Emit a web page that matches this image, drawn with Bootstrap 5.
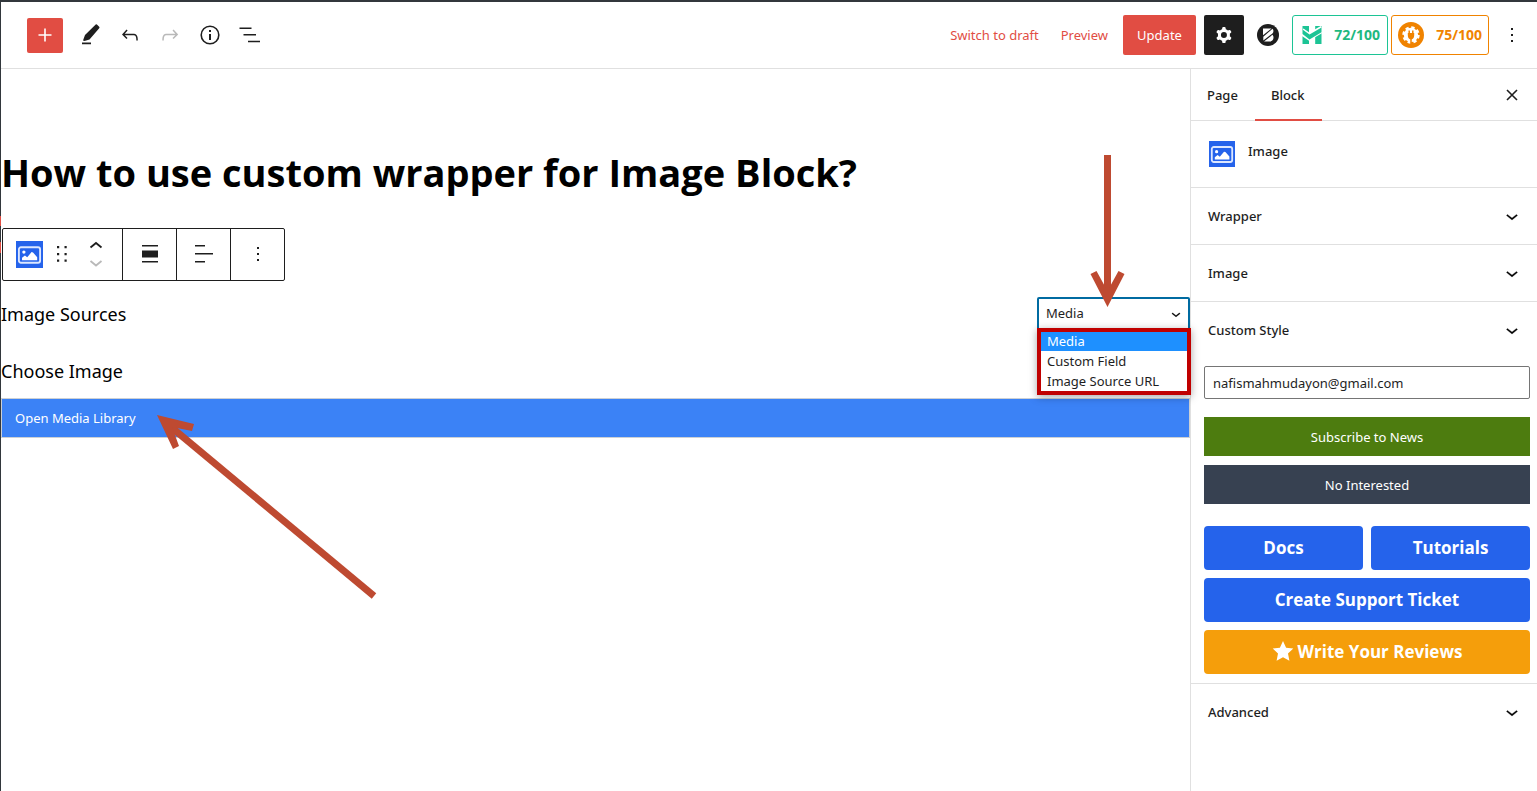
<!DOCTYPE html>
<html lang="en">
<head>
<meta charset="utf-8">
<meta name="viewport" content="width=device-width, initial-scale=1">
<title>Edit Page</title>
<link rel="stylesheet" href="https://cdn.jsdelivr.net/npm/bootstrap@5.3.0/dist/css/bootstrap.min.css">
<style>
:root { --ink: #1e1e1e; --accent: #e14d43; --line: #e0e0e0; --frame: #32373c; --royal: #2563eb; }
body { font-family: "Noto Sans", "Open Sans", sans-serif; font-size: 13px; line-height: 20px; color: var(--ink); background: #fff; border-top: 2px solid var(--frame); }
svg { display: block; flex: none; }
.frame-edge { width: 1px; background: linear-gradient(var(--frame) 214px, var(--accent) 214px 224px, var(--frame) 224px 240px, var(--accent) 240px 251px, var(--frame) 251px); }
button { color: inherit; }
.plain { border: 0; background: none; padding: 0; }
.topbar { height: 67px; border-bottom: 1px solid var(--line); padding: 0 10px 0 26px; }
.add-btn { width: 36px; height: 35px; border-radius: 2px; background: var(--accent); }
.tool-gap { gap: 16px; padding-left: 15px; }
.red-link { color: var(--accent); text-decoration: none; }
.links { gap: 22px; margin-right: 15px; }
.update-btn { height: 40px; width: 73px; background: var(--accent); color: #fff; border-radius: 2px; }
.gear-btn { width: 40px; height: 40px; background: var(--ink); border-radius: 2px; }
.score { height: 40px; border: 1px solid; border-radius: 3px; font-family: "Open Sans", sans-serif; font-size: 14px; font-weight: 700; padding: 0 7px; }
.score-green { color: #1fb980; border-color: #1cc495; width: 96px; }
.score-orange { color: #f08300; width: 98px; padding: 0 6px; margin-left: 3px; }
.sidebar { width: 347px; border-left: 1px solid var(--line); }
.tabs { height: 52px; border-bottom: 1px solid var(--line); padding-right: 16px; }
.tab-btn { padding: 0 17px 0 16px; font-weight: 500; }
.tab-btn.current { border-bottom: 2px solid var(--accent); padding-top: 2px; margin-bottom: -1px; }
.block-card { height: 67px; border-bottom: 1px solid var(--line); padding: 20px 18px; gap: 13px; font-weight: 500; }
.panel-head { width: 100%; height: 56px; padding: 0 13px 0 17px; font-weight: 500; }
.panel-line { border-bottom: 1px solid var(--line); }
.field { height: 33px; border: 1px solid #757575; border-radius: 2px; padding: 0 8px; width: 100%; color: var(--ink); }
.flat-btn { height: 39px; width: 100%; color: #fff; border: 0; }
.subscribe { background: #4d7c0f; margin-top: 18px; }
.decline { background: #374151; margin-top: 9px; }
.big-btn { height: 44px; border-radius: 4px; color: #fff; background: var(--royal); border: 0; font-family: "Open Sans", sans-serif; font-size: 17px; font-weight: 700; text-decoration: none; }
.big-btn.review { background: #f59e0b; }
.links-grid { margin-top: 14px; }
.help { padding: 8px 7px 9px 13px; border-bottom: 1px solid var(--line); }
.post-title { font-family: "Open Sans", sans-serif; font-size: 38px; line-height: 56px; font-weight: 700; color: #000; margin: 75px 0 28px; }
.block-bar { height: 53px; border: 1px solid var(--ink); border-radius: 2px; margin-left: 1px; }
.block-bar > * { display: flex; align-items: center; justify-content: center; padding-bottom: 1px !important; }
.block-bar > * + * { border-left: 1px solid var(--ink) !important; width: 54px; }
.block-main { width: 119px; padding: 0 19px 0 13px; }
.drag-grip { margin-right: 8px; }
.body-label { font-size: 18px; line-height: 34px; color: #000; }
.source-row { margin-top: 16px; height: 33px; }
.source-wrap { width: 153px; height: 33px; }
.source-select { width: 100%; height: 33px; border: 2px solid #006ba1; border-radius: 2px; padding: 0 7px 2px; appearance: none; background: #fff; color: var(--ink); outline: 0; }
.select-arrow { right: 5px; top: 8px; pointer-events: none; }
.options { top: 31px; left: 0; right: -1px; border: 4px solid #c00000; box-shadow: 0 2px 8px rgba(0,0,0,.35); z-index: 3; background: #fff; line-height: 19px; }
.options li { padding: 0 6px; }
.options li + li { padding-top: 1px; }
.options .picked { background: #1e90ff; color: #fff; }
.media-row { margin-top: 10px; }
.media-btn { height: 40px; width: 100%; background: #3b82f6; border: 1px solid #ccd0d4; color: #fff; text-align: left; padding: 0 13px; }
.arrow-down { top: -142px; left: 50px; z-index: 4; pointer-events: none; }
.arrow-up { left: 156px; top: 17px; pointer-events: none; }
</style>
<script src="https://cdn.jsdelivr.net/npm/bootstrap@5.3.0/dist/js/bootstrap.bundle.min.js"></script>
</head>
<body>
<svg width="0" height="0" class="position-absolute" aria-hidden="true">
  <symbol id="picture" viewBox="0 0 26 26"><rect width="26" height="26" fill="#2563eb"/><rect x="2.8" y="6" width="20.4" height="15" rx="2" fill="none" stroke="#dce7ff" stroke-width="1.8"/><circle cx="7.6" cy="10.7" r="1.6" fill="#fff"/><path d="M5.8 18.6v-2.400l2.800-2.200 2.200 1.700 4.200-5 1.400.3 4 4.600v3z" fill="#fff"/></symbol>
  <symbol id="chevron" viewBox="0 0 24 24"><path d="M17.500 11.600 12 16l-5.500-4.400.9-1.200L12 14l4.500-3.600 1 1.200z" stroke="#1e1e1e" stroke-width=".3"/></symbol>
  <symbol id="dots" viewBox="0 0 24 24"><path d="M13 19h-2v-2h2v2zm0-6h-2v-2h2v2zm0-6h-2V5h2v2z"/></symbol>
</svg>
<div class="d-flex align-items-stretch min-vh-100">
  <div class="frame-edge flex-shrink-0"></div>
  <div class="d-flex flex-column flex-grow-1">
    <header class="topbar d-flex align-items-center justify-content-between">
      <div class="d-flex align-items-center">
        <button class="plain add-btn d-flex align-items-center justify-content-center" aria-label="Add block"><svg width="24" height="24" viewBox="0 0 24 24" fill="#fff"><path d="M18.500 11.200h-5.700V5.500h-1.600v5.700H5.500v1.600h5.700v5.700h1.600v-5.700h5.700z"/></svg></button>
        <div class="d-flex tool-gap">
          <button class="plain" aria-label="Edit"><svg width="24" height="24" viewBox="0 0 24 24" fill="#1e1e1e"><path d="m21.200 3.800-2.300-2.300a1 1 0 0 0-1.200 0L7 12l-2 5.500 1.500.6 5-1.700L21.200 5.200a1 1 0 0 0 0-1.400zM4 19.600h9v1.600H4z"/></svg></button>
          <button class="plain" aria-label="Undo"><svg width="24" height="24" viewBox="0 0 24 24" fill="#1e1e1e"><path d="M18.300 11.700c-.6-.6-1.400-.9-2.300-.9H6.700l2.900-3.300-1.100-1-4.500 5L8.500 16l1-1-2.700-2.700H16c.5 0 .9.2 1.300.5 1 1 1 3.400 1 4.500v.3h1.500v-.2c0-1.500 0-4.300-1.500-5.700z"/></svg></button>
          <button class="plain" aria-label="Redo"><svg width="24" height="24" viewBox="0 0 24 24" fill="#b9b9b9"><path d="M15.600 6.500l-1.100 1 2.900 3.300H8c-.9 0-1.700.3-2.300.9-1.400 1.500-1.400 4.200-1.400 5.600v.2h1.500v-.3c0-1.100 0-3.500 1-4.500.3-.3.7-.5 1.300-.5h9.200L14.500 15l1.100 1.100 4.600-4.600-4.600-5z"/></svg></button>
          <button class="plain" aria-label="Details"><svg width="24" height="24" viewBox="0 0 24 24" fill="#1e1e1e"><circle cx="12" cy="12" r="8.800" fill="none" stroke="#1e1e1e" stroke-width="1.600"/><path d="M11 7h2v2h-2zm0 4h2v6h-2z"/></svg></button>
          <button class="plain" aria-label="Outline"><svg width="24" height="24" viewBox="0 0 24 24" fill="#1e1e1e"><path d="M1.500 4.500h12V6h-12zM5.500 11H18v1.500H5.500zM10 17.700h12v1.500H10z"/></svg></button>
        </div>
      </div>
      <div class="d-flex align-items-center">
        <div class="links d-flex">
          <a href="#" class="red-link">Switch to draft</a>
          <a href="#" class="red-link">Preview</a>
        </div>
        <button class="plain update-btn me-2">Update</button>
        <button class="plain gear-btn d-flex align-items-center justify-content-center me-2" aria-label="Settings"><svg width="24" height="24" viewBox="0 0 24 24" fill="#fff"><path fill-rule="evenodd" d="M10.289 4.836A1 1 0 0111.275 4h1.306a1 1 0 01.987.836l.244 1.466c.787.26 1.503.679 2.108 1.218l1.393-.522a1 1 0 011.216.437l.653 1.130a1 1 0 01-.23 1.273l-1.148.944a6.025 6.025 0 010 2.435l1.149.946a1 1 0 01.23 1.272l-.653 1.130a1 1 0 01-1.216.437l-1.394-.522c-.605.54-1.320.958-2.108 1.218l-.244 1.466a1 1 0 01-.987.836h-1.306a1 1 0 01-.986-.836l-.244-1.466a5.995 5.995 0 01-2.108-1.218l-1.394.522a1 1 0 01-1.217-.436l-.653-1.131a1 1 0 01.23-1.272l1.149-.946a6.026 6.026 0 010-2.435l-1.148-.944a1 1 0 01-.23-1.272l.653-1.131a1 1 0 011.217-.437l1.393.522a5.994 5.994 0 012.108-1.218l.244-1.466zM14.929 12a3 3 0 11-6 0 3 3 0 016 0z"/></svg></button>
        <button class="plain mx-1" aria-label="Builder"><svg width="24" height="24" viewBox="0 0 24 24"><circle cx="12" cy="12" r="11" fill="#1e1e1e"/><path d="M7 5.500h8.500L7 12.200zM16.500 5.800c1.300 1.200 1.300 3.500-.3 4.900L7.300 17.400V13.800zM16.500 11.800c2.200 2.400.6 6.700-3 6.700H8z" fill="#fff"/></svg></button>
        <button class="plain score score-green d-flex align-items-center justify-content-between ms-2"><svg width="24" height="24" viewBox="0 0 24 24"><path d="M2.500 3h6.500v18H2.500zM15.200 3h6.300v18h-6.300z" fill="#1cc495"/><path d="m1.500 8.500 7.700 5.200 13.300-7.800" fill="none" stroke="#fff" stroke-width="7"/><path d="M2.500 6.500 9.500 11.500 21.500 4.500v4.800L9.500 16.500 2.500 11z" fill="#1cc495"/></svg>72/100</button>
        <button class="plain score score-orange d-flex align-items-center justify-content-between"><svg width="26" height="26" viewBox="0 0 26 26"><circle cx="13" cy="13" r="13" fill="#f08300"/><circle cx="13" cy="13" r="7.200" fill="#fff"/><circle cx="13" cy="13" r="7.200" fill="none" stroke="#fff" stroke-width="3" stroke-dasharray="3.200 2.455"/><path d="M11.200 8.500v3M14.800 8.500v3M13 16v8" stroke="#f08300" stroke-width="1.500"/><path d="M9.800 11h6.400v2c0 2.500-1 4-2.200 4.300h-2c-1.200-.3-2.200-1.800-2.200-4.300z" fill="#f08300"/></svg>75/100</button>
        <button class="plain ms-2" aria-label="Options"><svg width="30" height="24" fill="#1e1e1e"><use href="#dots" width="30" height="24"/></svg></button>
      </div>
    </header>
    <div class="d-flex flex-grow-1">
      <main class="flex-grow-1">
        <h1 class="post-title">How to use custom wrapper for Image Block?</h1>
        <div class="block-bar d-inline-flex align-top" role="toolbar" aria-label="Block tools">
          <div class="block-main d-flex justify-content-between">
            <button class="plain" aria-label="Image block"><svg width="27" height="27"><use href="#picture"/></svg></button>
            <button class="plain drag-grip" aria-label="Drag"><svg width="12" height="18" viewBox="0 0 12 18" fill="#1e1e1e"><path d="M1 1h2.200v2.200H1zM8.500 1h2.200v2.200H8.500zM1 8h2.200v2.200H1zM8.500 8h2.200v2.200H8.500zM1 14.500h2.200v2.200H1zM8.500 14.500h2.200v2.200H8.500z"/></svg></button>
            <span class="d-flex flex-column gap-2">
              <button class="plain" aria-label="Move up"><svg width="14" height="10" viewBox="0 0 14 10" fill="none" stroke="#1e1e1e" stroke-width="1.800"><path d="m1.500 7.500 5.500-4.500 5.500 4.500"/></svg></button>
              <button class="plain" aria-label="Move down"><svg width="14" height="10" viewBox="0 0 14 10" fill="none" stroke="#b9b9b9" stroke-width="1.800"><path d="m1.500 3 5.500 4.500 5.500-4.500"/></svg></button>
            </span>
          </div>
          <button class="plain" aria-label="Align"><svg width="24" height="24" viewBox="0 0 24 24" fill="#1e1e1e"><path d="M4 3h16v1.600H4zM4 8.500h16v7H4zM4 19h16v1.600H4z"/></svg></button>
          <button class="plain" aria-label="Text align"><svg width="24" height="24" viewBox="0 0 24 24" fill="#1e1e1e"><path d="M3 3h10v1.600H3zM3 11h18v1.600H3zM3 19h10v1.600H3z"/></svg></button>
          <button class="plain" aria-label="More"><svg width="24" height="24" fill="#1e1e1e"><use href="#dots"/></svg></button>
        </div>
        <div class="source-row d-flex justify-content-between">
          <label class="body-label" for="source">Image Sources</label>
          <div class="source-wrap position-relative">
            <select id="source" class="source-select"><option selected>Media</option><option>Custom Field</option><option>Image Source URL</option></select>
            <svg class="select-arrow position-absolute" width="18" height="18"><use href="#chevron"/></svg>
            <ul class="options list-unstyled position-absolute mb-0" role="listbox" aria-label="Image Sources">
              <li class="picked" role="option" aria-selected="true">Media</li><li role="option">Custom Field</li><li role="option">Image Source URL</li>
            </ul>
            <svg class="arrow-down position-absolute" width="40" height="154" viewBox="0 0 40 154" aria-hidden="true"><path d="M20.500 0v138" stroke="#be4a31" stroke-width="7"/><path d="m3.500 119 6-3 11 20 11-20 6 3-17 33z" fill="#be4a31"/></svg>
          </div>
        </div>
        <p class="body-label mt-4 mb-0">Choose Image</p>
        <div class="media-row position-relative">
          <button class="media-btn">Open Media Library</button>
          <svg class="arrow-up position-absolute" width="224" height="184" viewBox="0 0 224 184" aria-hidden="true"><path d="M14 12 217 181" stroke="#be4a31" stroke-width="7"/><path d="M0 0 37 9l-2 7-20-4 7 19-6 3z" fill="#be4a31"/></svg>
        </div>
      </main>
      <aside class="sidebar flex-shrink-0">
        <div class="tabs d-flex justify-content-between">
          <div class="d-flex">
            <button class="plain tab-btn">Page</button><button class="plain tab-btn current">Block</button>
          </div>
          <button class="plain" aria-label="Close"><svg width="18" height="18" viewBox="0 0 18 18" fill="none" stroke="#1e1e1e" stroke-width="1.600"><path d="m4 4 10 10M14 4 4 14"/></svg></button>
        </div>
        <div class="block-card d-flex"><svg width="26" height="26"><use href="#picture"/></svg><span>Image</span></div>
        <div class="panel-line"><button class="plain panel-head d-flex align-items-center justify-content-between">Wrapper<svg width="24" height="24"><use href="#chevron"/></svg></button></div>
        <div class="panel-line"><button class="plain panel-head d-flex align-items-center justify-content-between">Image<svg width="24" height="24"><use href="#chevron"/></svg></button></div>
        <button class="plain panel-head d-flex align-items-center justify-content-between">Custom Style<svg width="24" height="24"><use href="#chevron"/></svg></button>
        <div class="help">
          <input class="field" type="email" aria-label="Email" value="nafismahmudayon@gmail.com">
          <button class="flat-btn subscribe d-block">Subscribe to News</button>
          <button class="flat-btn decline d-block">No Interested</button>
          <div class="row g-2 links-grid">
            <div class="col-6"><a href="#" class="big-btn d-flex align-items-center justify-content-center">Docs</a></div>
            <div class="col-6"><a href="#" class="big-btn d-flex align-items-center justify-content-center">Tutorials</a></div>
            <div class="col-12"><a href="#" class="big-btn d-flex align-items-center justify-content-center">Create Support Ticket</a></div>
            <div class="col-12"><a href="#" class="big-btn review d-flex align-items-center justify-content-center gap-1"><svg width="22" height="22" viewBox="0 0 22 22" fill="#fff"><path d="m11 0 3.100 6.700 7.200.9-5.300 5 1.400 7.200L11 16.300l-6.400 3.500L6 12.600.7 7.600l7.200-.9z"/></svg>Write Your Reviews</a></div>
          </div>
        </div>
        <button class="plain panel-head d-flex align-items-center justify-content-between">Advanced<svg width="24" height="24"><use href="#chevron"/></svg></button>
      </aside>
    </div>
  </div>
</div>
</body>
</html>
